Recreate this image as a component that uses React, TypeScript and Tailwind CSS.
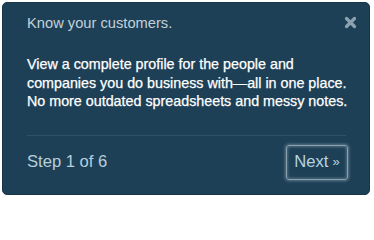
import React from "react";

export default function App() {
  return (
    <div className="w-[374px] h-[200px] bg-white pt-[2px] pl-[2px]" style={{ fontFamily: '"Liberation Sans", Arial, sans-serif' }}>
      <div className="relative w-[368px] h-[193px] rounded-[5px] bg-[#1d4057] border border-[#18364a] px-[24px] pt-[11px] flex flex-col">
        <div className="text-[14.7px] leading-[18px] text-[#c3d0d8]">Know your customers.</div>
        <div className="absolute right-[12px] top-[13px] text-[#8ca2b0]">
          <svg width="13" height="13" viewBox="0 0 13 13">
            <path d="M2.5 2.5 L10.5 10.5 M10.5 2.5 L2.5 10.5" stroke="currentColor" strokeWidth="3.2" strokeLinecap="round" />
          </svg>
        </div>
        <div className="mt-[23px] whitespace-nowrap text-[14.3px] leading-[18.5px] text-white [-webkit-text-stroke:0.25px_white]">
          View a complete profile for the people and
          <br />
          companies you do business with—all in one place.
          <br />
          No more outdated spreadsheets and messy notes.
        </div>
        <div className="mt-[24px] border-t border-[#2d5167] mr-[-1px]" />
        <div className="mt-[9px] flex items-center justify-between">
          <div className="text-[16.6px] leading-[20px] text-[#b7cfdc]">Step 1 of 6</div>
          <div className="w-[62px] h-[35px] mr-[-3px] rounded-[3px] border border-[#8aa0ad] shadow-[0_0_3px_1px_rgba(150,172,186,0.55),inset_0_0_3px_1px_rgba(150,172,186,0.45)] flex items-center justify-center text-[16.6px] leading-[20px] text-[#b7d3e0]">
            Next <span className="ml-[4px] text-[13px]">»</span>
          </div>
        </div>
      </div>
    </div>
  );
}
